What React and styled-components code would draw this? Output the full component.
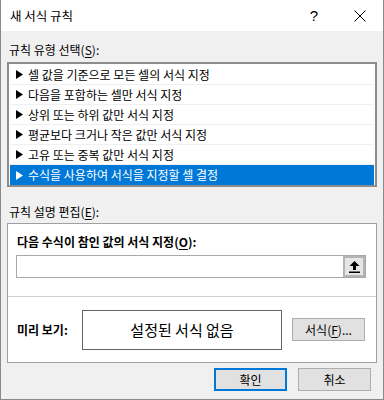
import React from 'react'
import styled, { createGlobalStyle } from 'styled-components';

const GlobalStyle = createGlobalStyle`
  html, body {
    margin: 0;
    padding: 0;
    background: #ffffff;
  }
  * {
    box-sizing: border-box;
  }
`;

const rules = [
  '셀 값을 기준으로 모든 셀의 서식 지정',
  '다음을 포함하는 셀만 서식 지정',
  '상위 또는 하위 값만 서식 지정',
  '평균보다 크거나 작은 값만 서식 지정',
  '고유 또는 중복 값만 서식 지정',
  '수식을 사용하여 서식을 지정할 셀 결정',
];

const App = () => {
  return (
    <Window>
      <GlobalStyle />
      <TitleBar>
        <Title>새 서식 규칙</Title>
        <CaptionButton>?</CaptionButton>
        <CaptionButton>
          <svg width="12" height="12" viewBox="0 0 12 12">
            <path d="M0.5 0.5 L11.5 11.5 M11.5 0.5 L0.5 11.5" stroke="#000" strokeWidth="1" />
          </svg>
        </CaptionButton>
      </TitleBar>

      <Body>
        <SectionLabel>규칙 유형 선택(<u>S</u>):</SectionLabel>
        <RuleList>
          {rules.map((rule, index) => (
            <RuleRow key={index} $selected={index === rules.length - 1}>
              <Arrow>
                <svg width="7" height="9" viewBox="0 0 7 9">
                  <path d="M0 0 L7 4.5 L0 9 Z" fill="currentColor" />
                </svg>
              </Arrow>
              {rule}
            </RuleRow>
          ))}
        </RuleList>

        <SectionLabel $top={17}>규칙 설명 편집(<u>E</u>):</SectionLabel>
        <Panel>
          <FormulaPart>
            <BoldLabel>다음 수식이 참인 값의 서식 지정(<u>O</u>):</BoldLabel>
            <FormulaInput>
              <RefButton>
                <svg width="11" height="12" viewBox="0 0 11 12">
                  <path d="M5.5 0 L10.5 5 L7 5 L7 9 L4 9 L4 5 L0.5 5 Z" fill="#000" />
                  <rect x="0" y="10.5" width="11" height="1.5" fill="#000" />
                </svg>
              </RefButton>
            </FormulaInput>
          </FormulaPart>
          <PreviewPart>
            <BoldLabel>미리 보기:</BoldLabel>
            <PreviewBox>설정된 서식 없음</PreviewBox>
            <DialogButton $width={73}>서식(<u>F</u>)...</DialogButton>
          </PreviewPart>
        </Panel>

        <Footer>
          <DialogButton $width={73} $default>확인</DialogButton>
          <DialogButton $width={73}>취소</DialogButton>
        </Footer>
      </Body>
    </Window>
  )
}

export default App;


const Window = styled.div`
  width: 384px;
  height: 400px;
  display: flex;
  flex-direction: column;
  border: 1px solid #8a8a8a;
  border-top: none;
  font-family: "Noto Sans CJK KR", "Noto Sans", sans-serif;
  font-size: 12px;
  color: #000;
  overflow: hidden;
`;

const TitleBar = styled.div`
  height: 31px;
  flex-shrink: 0;
  display: flex;
  align-items: center;
  background: #ffffff;
`;

const Title = styled.div`
  flex: 1;
  padding-left: 9px;
  font-size: 12.5px;
  line-height: 16px;
`;

const CaptionButton = styled.div`
  width: 46px;
  height: 31px;
  display: flex;
  align-items: center;
  justify-content: center;
  font-family: "Liberation Sans", sans-serif;
  font-size: 15px;
`;

const Body = styled.div`
  flex: 1;
  background: #f0f0f0;
  padding: 11px 6px 0 6px;
  display: flex;
  flex-direction: column;
`;

const SectionLabel = styled.div`
  line-height: 16px;
  padding-left: 2px;
  margin-top: ${p => (p.$top || 0)}px;
  margin-bottom: ${p => (p.$top ? 3 : 4)}px;

  u {
    text-decoration-thickness: 1px;
    text-underline-offset: 2px;
  }
`;

const RuleList = styled.div`
  height: 125px;
  border: 2px solid #8c8c8c;
  background: #ffffff;
  padding: 1px;
`;

const RuleRow = styled.div`
  height: 20px;
  display: flex;
  align-items: center;
  padding-left: 6px;
  line-height: 16px;
  white-space: nowrap;
  border-bottom: 1px solid #f0f0f0;
  background: ${p => (p.$selected ? '#0078d7' : 'transparent')};
  color: ${p => (p.$selected ? '#ffffff' : '#000000')};

  &:last-child {
    border-bottom: none;
  }
`;

const Arrow = styled.span`
  width: 12px;
  display: inline-flex;
  align-items: center;
`;

const Panel = styled.div`
  height: 140px;
  border: 1px solid #a0a0a0;
  background: #ffffff;
  display: flex;
  flex-direction: column;
`;

const FormulaPart = styled.div`
  height: 73px;
  border-bottom: 1px solid #d0d0d0;
  padding: 10px 10px 0 8px;
  display: flex;
  flex-direction: column;
  gap: 5px;
`;

const BoldLabel = styled.div`
  font-weight: bold;
  line-height: 16px;
  padding-left: 1px;
  white-space: nowrap;

  u {
    text-underline-offset: 2px;
  }
`;

const FormulaInput = styled.div`
  height: 23px;
  border: 1px solid #a8a8a8;
  background: #ffffff;
  display: flex;
  justify-content: flex-end;
`;

const RefButton = styled.div`
  width: 22px;
  height: 21px;
  border: 2px solid #b4b4b4;
  background: #e6e6e6;
  display: flex;
  align-items: center;
  justify-content: center;
`;

const PreviewPart = styled.div`
  flex: 1;
  display: flex;
  align-items: center;
  padding: 0 10px 0 8px;

  ${BoldLabel} {
    width: 66px;
  }
`;

const PreviewBox = styled.div`
  width: 200px;
  height: 40px;
  border: 1px solid #646464;
  display: flex;
  align-items: center;
  justify-content: center;
  font-size: 15px;
  margin-right: 10px;
`;

const DialogButton = styled.div`
  width: ${p => p.$width}px;
  height: 23px;
  display: flex;
  align-items: center;
  justify-content: center;
  background: #e1e1e1;
  border: ${p => (p.$default ? '2px solid #0078d7' : '1px solid #adadad')};
  line-height: 16px;

  u {
    text-underline-offset: 2px;
  }
`;

const Footer = styled.div`
  display: flex;
  justify-content: flex-end;
  gap: 11px;
  padding-right: 6px;
  margin-top: 5px;
`;
